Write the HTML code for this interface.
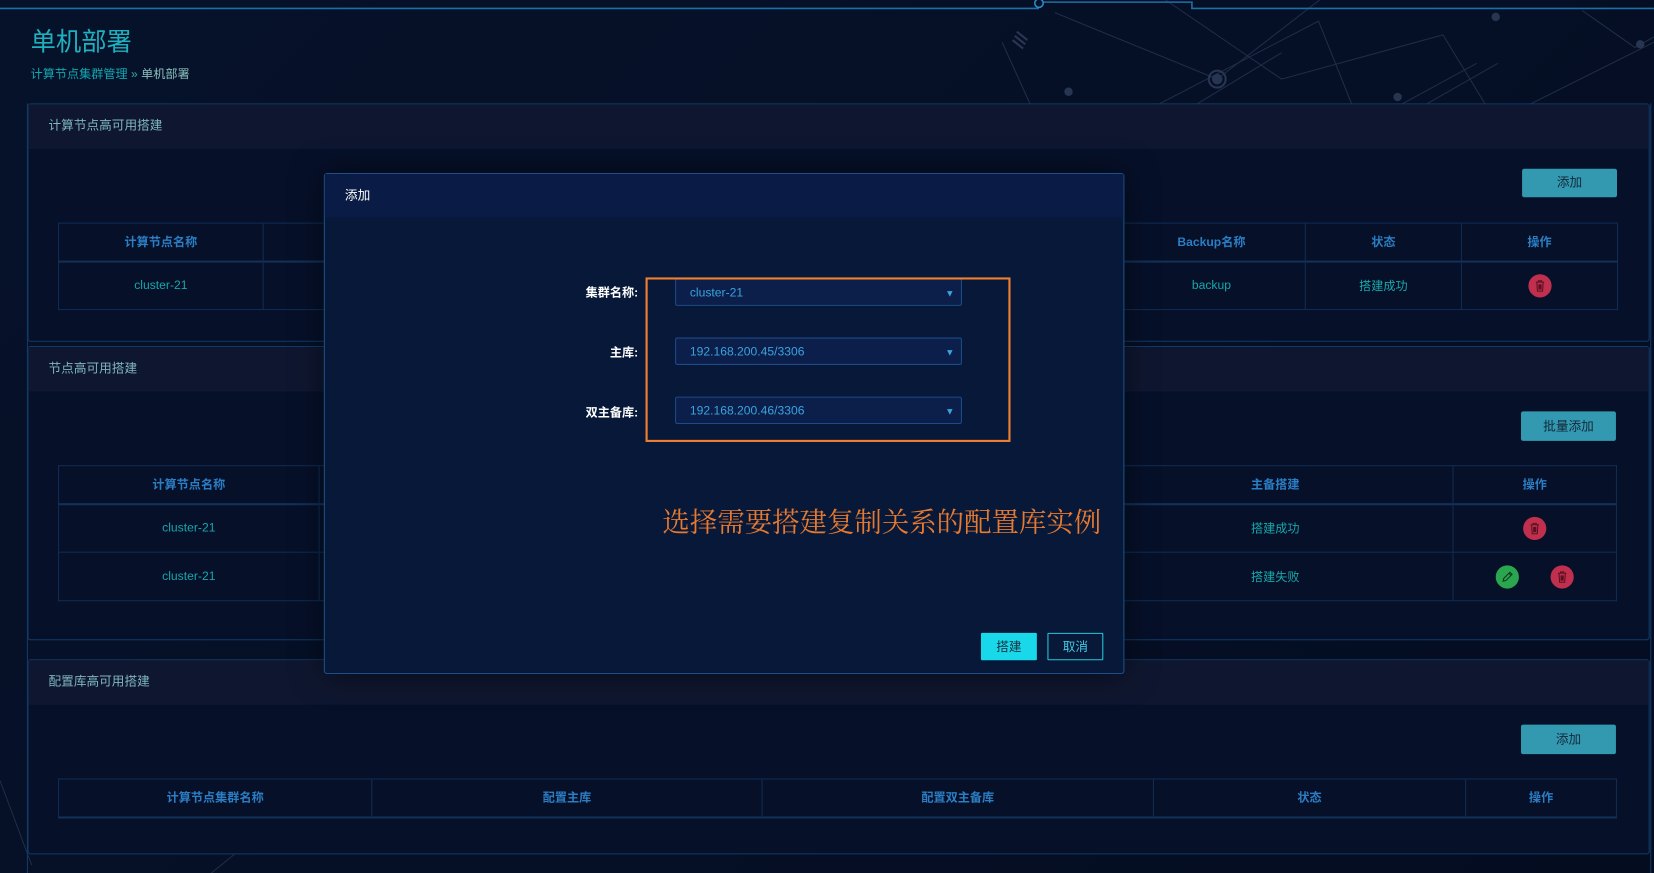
<!DOCTYPE html>
<html><head><meta charset="utf-8">
<style>
html,body{margin:0;padding:0;width:1654px;height:873px;overflow:hidden;background:#050f25;}
#w{position:absolute;left:0;top:0;width:1568px;height:828px;transform:scale(1.0548);transform-origin:0 0;
font-family:"Liberation Sans","Noto Sans CJK SC",sans-serif;background:linear-gradient(135deg,#06122a,#050f25 60%,#040c20);}
.abs{position:absolute}
.panel{position:absolute;left:26px;width:1536px;border:1px solid #123a66;border-radius:3px;background:#061029;}
.ph{height:41px;background:#0f1730;color:#7fb5bd;font-size:12px;line-height:41px;padding-left:19px;border-bottom:1px solid #0c1a38}
.btn{position:absolute;background:#3399b0;color:#13283a;font-size:12px;text-align:center;border-radius:2px}
table{position:absolute;border-collapse:collapse;font-size:11.5px}
td{border:1px solid #112c52;text-align:center;color:#16a7aa;padding:0}
th{border:1px solid #112c52;border-bottom:2px solid #123058;text-align:center;color:#2b7ec4;font-weight:bold;padding:0}
.ic{display:inline-block;width:22px;height:22px;border-radius:50%;background:#c0304e;vertical-align:middle;position:relative}
.ic.g{background:#2aa64f}
.ic svg{position:absolute;left:5px;top:5px}
.lbl{position:absolute;color:#fff;font-weight:bold;font-size:11.5px}
.sel{position:absolute;left:332px;width:272px;height:26px;background:#0b1f4a;border:1px solid #1d4a88;border-radius:2px;color:#3aa3e0;font-size:11.5px;line-height:26px;padding-left:13px;box-sizing:border-box}
.sel span{position:absolute;right:6px;top:0;font-size:9px;color:#3aa3e0}
</style></head><body>
<svg width="0" height="0" style="position:absolute"><defs>
<symbol id="tr" viewBox="0 0 12 12"><path d="M2 2.5h8M4.5 2.5V1.2h3v1.3M3 2.5l.6 8.5h4.8l.6-8.5M5 4.5v5M6 4.5v5M7 4.5v5" stroke="#5a1020" stroke-width="1" fill="none"/></symbol>
<symbol id="pn" viewBox="0 0 12 12"><path d="M2 10l.6-2.6L8.5 1.5l2 2L4.6 9.4zM7.5 2.5l2 2" stroke="#0d3a1c" stroke-width="1" fill="none"/></symbol>
</defs></svg>
<div id="w">
<svg class="abs" style="left:0;top:0" width="1568" height="828">
<g stroke="#1f2d48" stroke-width="1" fill="none">
<path d="M1000 12 L1154 75 L1251 0"/><path d="M1105 0 L1215 75 L1368 33 L1418 115 L1568 40"/>
<path d="M1000 150 L1250 20 L1290 120 L1400 60"/><path d="M1050 150 L1215 50"/>
<path d="M950 40 L1000 150"/><path d="M1280 140 L1420 60"/><path d="M1500 10 L1550 45 L1568 35"/>
<path d="M960 38 l10 8 M962 34 l10 8 M964 30 l10 8" stroke="#2a3652" stroke-width="2"/>
<path d="M0 740 L30 820"/><path d="M200 828 L320 730"/>
</g>
<g fill="#283550"><circle cx="1013" cy="87" r="4"/><circle cx="1154" cy="75" r="5"/><circle cx="1418" cy="16" r="4"/><circle cx="1555" cy="42" r="4"/><circle cx="1325" cy="92" r="4"/></g>
<circle cx="1154" cy="75" r="8" fill="none" stroke="#283550" stroke-width="2"/>
<path d="M0 8 H985 M985 2 H1130 V8 H1568" stroke="#1e6fa8" stroke-width="1.5" fill="none"/>
<circle cx="985" cy="3" r="4" fill="#06122a" stroke="#2a8ac8" stroke-width="1.5"/>
<path d="M26 98 V828 M1565 98 V828" stroke="#123a66"/>
</svg>
<div class="abs" style="left:29px;top:20px;font-size:24px;color:#1fb0bf">单机部署</div>
<div class="abs" style="left:29px;top:62px;font-size:11.5px;color:#13a6b0">计算节点集群管理 <span style="color:#3aa;">»</span> <span style="color:#8bbfbf">单机部署</span></div>

<div class="panel" style="top:98px;height:224px">
<div class="ph">计算节点高可用搭建</div>
<div class="btn" style="left:1416px;top:61px;width:90px;height:27px;line-height:27px">添加</div>
<table style="left:28px;top:112px;width:1479px">
<tr style="height:36px"><th style="width:193px">计算节点名称</th><th></th><th style="width:177px">Backup名称</th><th style="width:147px">状态</th><th style="width:147px">操作</th></tr>
<tr style="height:46px"><td>cluster-21</td><td></td><td>backup</td><td>搭建成功</td><td><span class="ic"><svg width="12" height="12"><use href="#tr"/></svg></span></td></tr>
</table>
</div>

<div class="panel" style="top:328px;height:277px">
<div class="ph">节点高可用搭建</div>
<div class="btn" style="left:1415px;top:61px;width:90px;height:28px;line-height:28px">批量添加</div>
<table style="left:28px;top:112px;width:1478px">
<tr style="height:36px"><th style="width:246px">计算节点名称</th><th></th><th style="width:336px">主备搭建</th><th style="width:154px">操作</th></tr>
<tr style="height:46px"><td>cluster-21</td><td></td><td>搭建成功</td><td><span class="ic"><svg width="12" height="12"><use href="#tr"/></svg></span></td></tr>
<tr style="height:46px"><td>cluster-21</td><td></td><td>搭建失败</td><td><span class="ic g"><svg width="12" height="12"><use href="#pn"/></svg></span><span style="display:inline-block;width:30px"></span><span class="ic"><svg width="12" height="12"><use href="#tr"/></svg></span></td></tr>
</table>
</div>

<div class="panel" style="top:625px;height:183px">
<div class="ph">配置库高可用搭建</div>
<div class="btn" style="left:1415px;top:61px;width:90px;height:28px;line-height:28px">添加</div>
<table style="left:28px;top:112px;width:1478px">
<tr style="height:36px"><th style="width:296px">计算节点集群名称</th><th style="width:369px">配置主库</th><th style="width:370px">配置双主备库</th><th style="width:295px">状态</th><th>操作</th></tr>
</table>
</div>

<div class="abs" style="left:307px;top:164px;width:757px;height:473px;background:#071838;border:1px solid #1a4f8a;border-radius:3px;box-shadow:0 0 30px rgba(0,0,0,.5)">
<div style="height:41px;background:#0a1c45;color:#fff;font-size:12px;line-height:41px;padding-left:19px">添加</div>
<div class="lbl" style="top:104px;right:460px">集群名称:</div>
<div class="lbl" style="top:161px;right:460px">主库:</div>
<div class="lbl" style="top:218px;right:460px">双主备库:</div>
<div class="sel" style="top:99px">cluster-21<span>▼</span></div>
<div class="sel" style="top:155px">192.168.200.45/3306<span>▼</span></div>
<div class="sel" style="top:211px">192.168.200.46/3306<span>▼</span></div>
<div class="abs" style="left:304px;top:98px;width:342px;height:152px;border:2px solid #f08030"></div>
<div class="abs" style="left:320px;top:310px;font-size:26px;color:#e87a30;font-family:'Noto Serif CJK SC',serif;white-space:nowrap">选择需要搭建复制关系的配置库实例</div>
<div class="abs" style="left:622px;top:435px;width:53px;height:26px;background:#18d8ea;color:#173040;font-size:12px;line-height:26px;text-align:center;border-radius:1px">搭建</div>
<div class="abs" style="left:685px;top:435px;width:51px;height:24px;border:1px solid #22c8dc;color:#40c8dc;font-size:12px;line-height:24px;text-align:center;border-radius:1px">取消</div>
</div>
</div>
</body></html>
